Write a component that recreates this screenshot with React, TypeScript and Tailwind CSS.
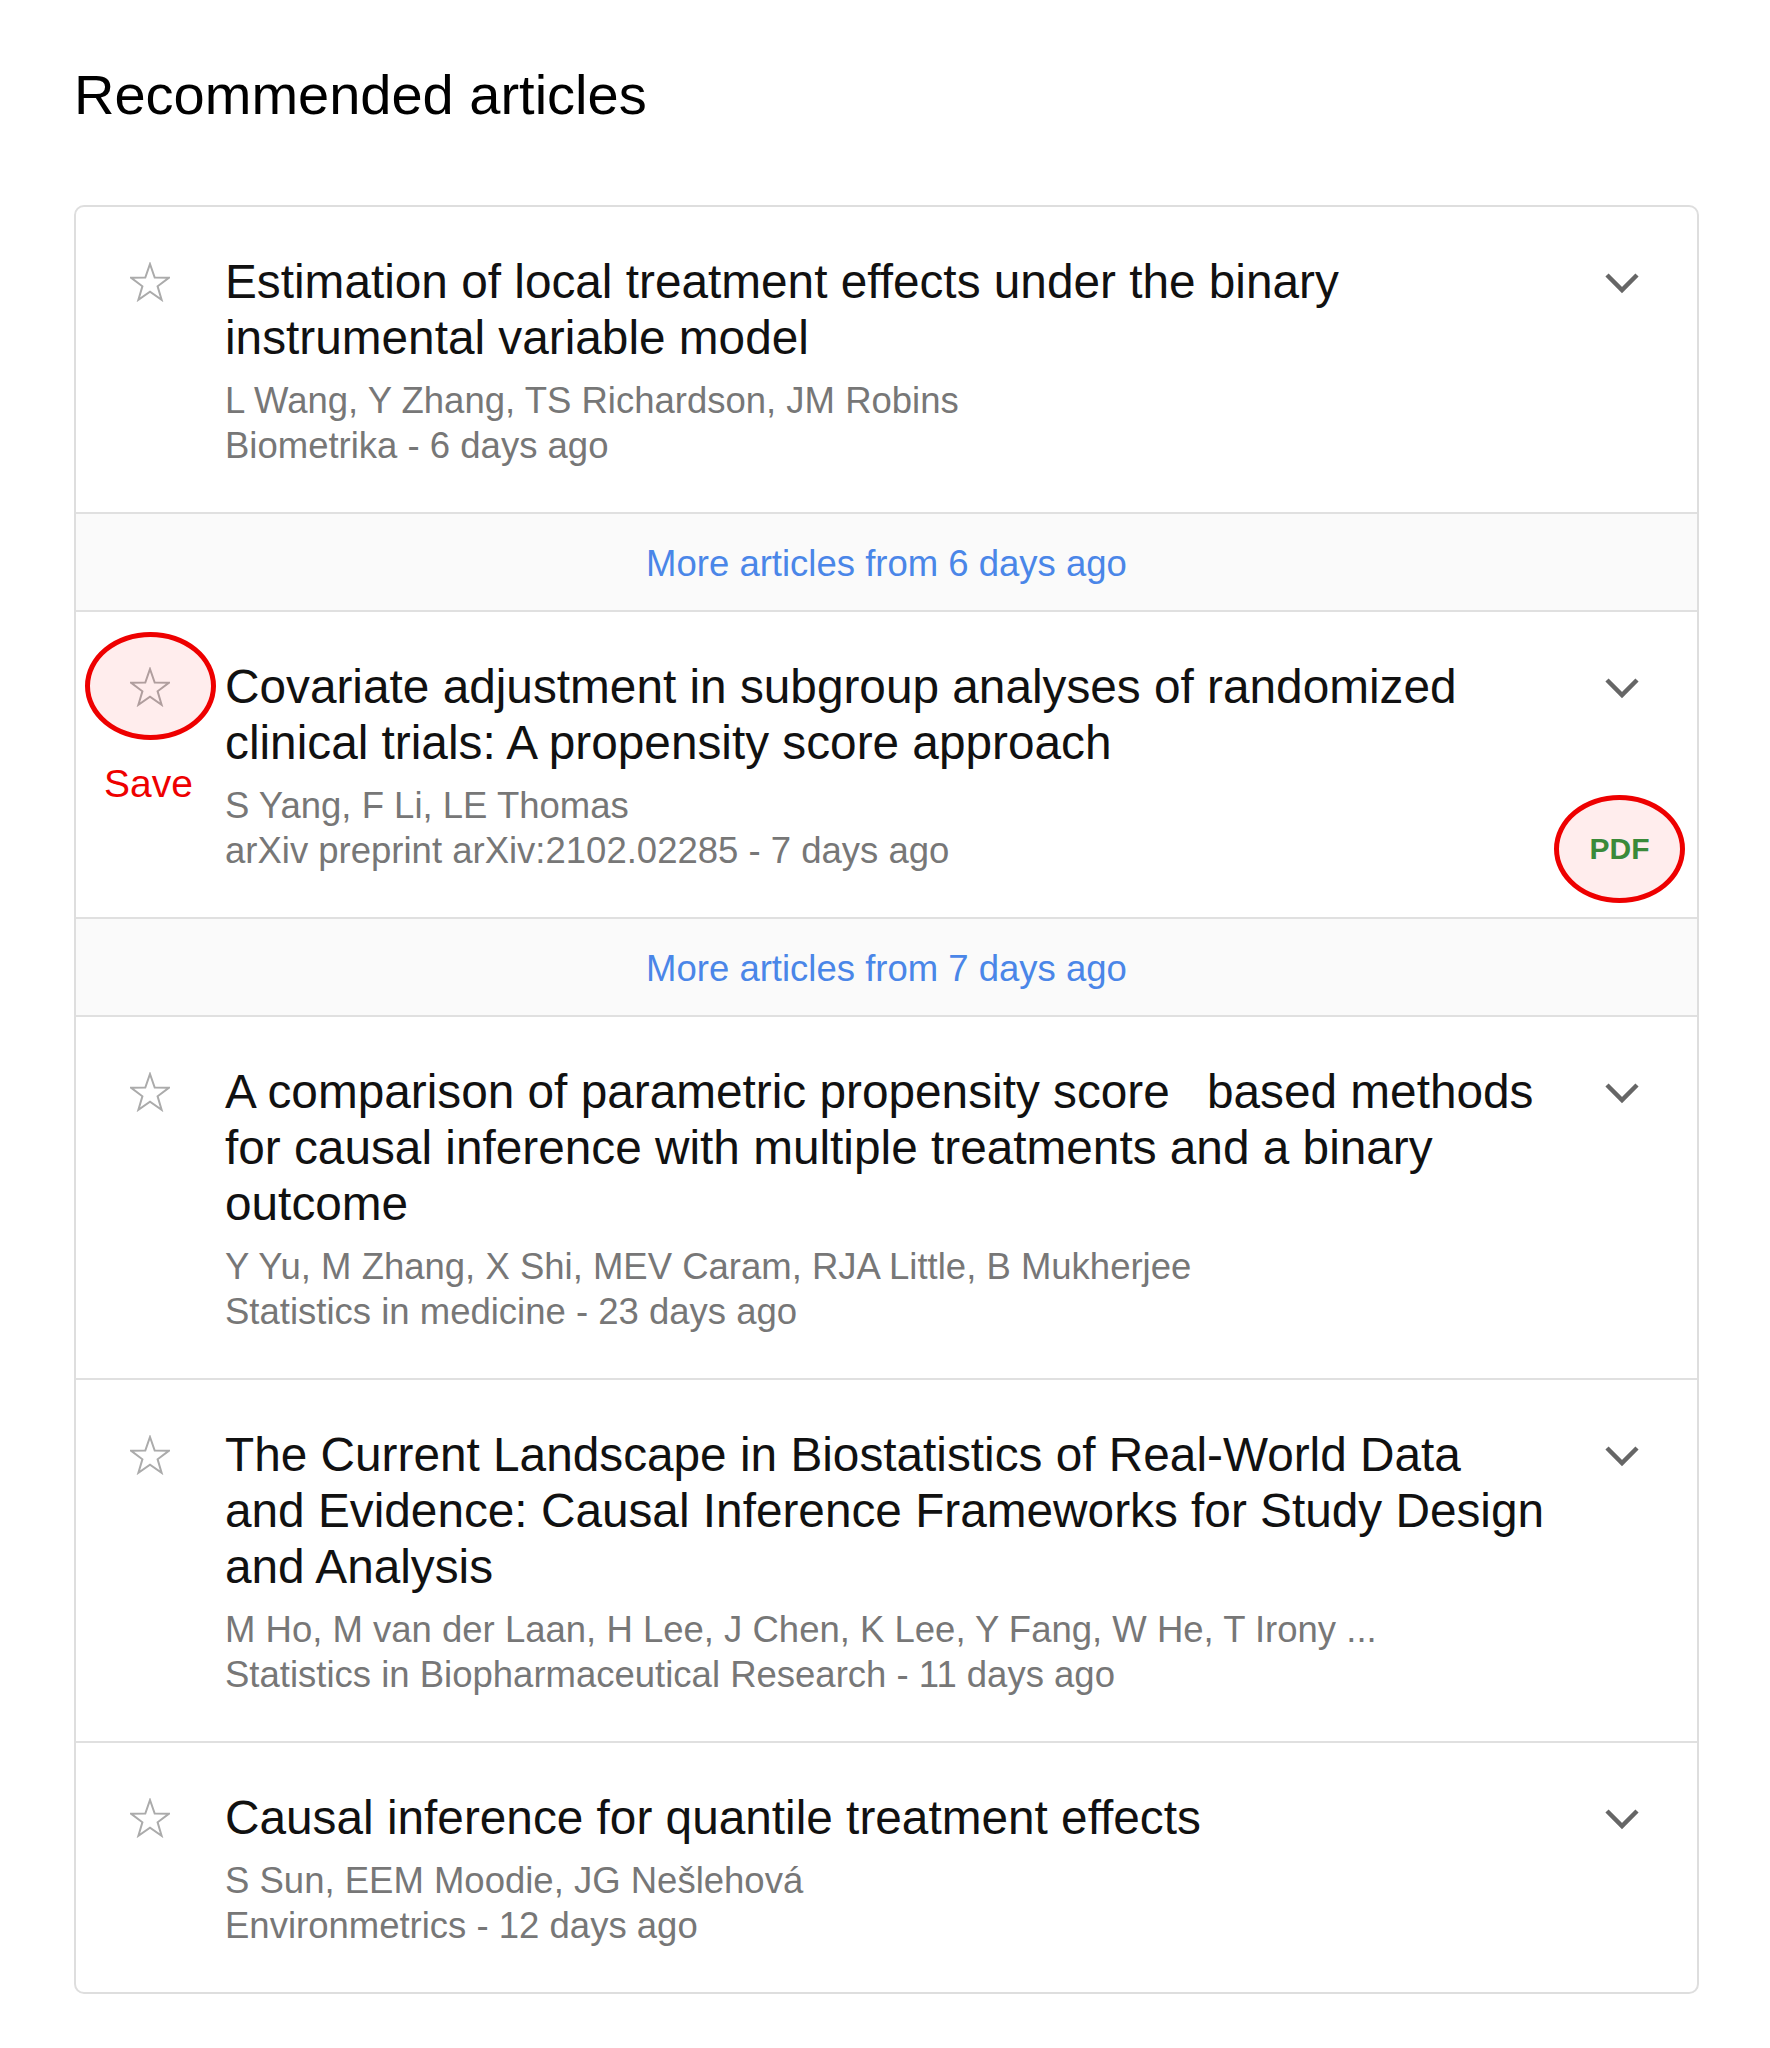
import React from "react";

type Article = {
  title: string;
  authors: string;
  source: string;
  annotated?: boolean;
};

const articles: Article[] = [
  {
    title: "Estimation of local treatment effects under the binary instrumental variable model",
    authors: "L Wang, Y Zhang, TS Richardson, JM Robins",
    source: "Biometrika - 6 days ago",
  },
  {
    title: "Covariate adjustment in subgroup analyses of randomized clinical trials: A propensity score approach",
    authors: "S Yang, F Li, LE Thomas",
    source: "arXiv preprint arXiv:2102.02285 - 7 days ago",
    annotated: true,
  },
  {
    title:
      "A comparison of parametric propensity score\u2002 based methods for causal inference with multiple treatments and a binary outcome",
    authors: "Y Yu, M Zhang, X Shi, MEV Caram, RJA Little, B Mukherjee",
    source: "Statistics in medicine - 23 days ago",
  },
  {
    title:
      "The Current Landscape in Biostatistics of Real-World Data and Evidence: Causal Inference Frameworks for Study Design and Analysis",
    authors: "M Ho, M van der Laan, H Lee, J Chen, K Lee, Y Fang, W He, T Irony ...",
    source: "Statistics in Biopharmaceutical Research - 11 days ago",
  },
  {
    title: "Causal inference for quantile treatment effects",
    authors: "S Sun, EEM Moodie, JG Nešlehová",
    source: "Environmetrics - 12 days ago",
  },
];

function Star() {
  return (
    <svg width="40" height="40" viewBox="0 0 40 40" className="block">
      <polygon
        points="20,2 24.7,15.5 38.8,15.8 27.6,24.3 31.6,37.8 20,29.8 8.4,37.8 12.4,24.3 1.2,15.8 15.3,15.5"
        fill="none"
        stroke="#ababab"
        strokeWidth="2"
        strokeLinejoin="miter"
      />
    </svg>
  );
}

function Chevron() {
  return (
    <svg width="34" height="22" viewBox="0 0 34 22" className="block">
      <polyline points="2,3 17,18 32,3" fill="none" stroke="#666666" strokeWidth="4.5" />
    </svg>
  );
}

function ArticleRow({ a }: { a: Article }) {
  return (
    <div className="relative flex items-start pt-[47px] pb-[44px] pl-[54px] pr-[58px]">
      <div className="w-[40px] shrink-0 pt-[8px]">
        <Star />
      </div>
      <div className="ml-[55px] mr-[27px] w-[1323px] shrink-0">
        <div className="text-[47.75px] leading-[56px] text-[#111111]">{a.title}</div>
        <div className="mt-[12px] text-[36.5px] leading-[45px] text-[#777777]">
          <div>{a.authors}</div>
          <div>{a.source}</div>
        </div>
      </div>
      <div className="ml-[30px] w-[34px] shrink-0 pt-[18px]">
        <Chevron />
      </div>
      {a.annotated && (
        <>
          <div className="absolute left-[9px] top-[20px] h-[108px] w-[131px] rounded-[50%] border-[5px] border-[#ee0000] bg-[rgba(255,0,0,0.07)]" />
          <div className="absolute left-[28px] top-[149px] text-[39px] leading-[45px] text-[#ee0000]">
            Save
          </div>
          <div className="absolute right-[12px] top-[183px] flex h-[108px] w-[131px] items-center justify-center rounded-[50%] border-[5px] border-[#ee0000] bg-[rgba(255,0,0,0.07)]">
            <span className="text-[30px] font-bold leading-none text-[#3a8a3a]">PDF</span>
          </div>
        </>
      )}
    </div>
  );
}

function MoreRow({ label }: { label: string }) {
  return (
    <div className="border-t-2 border-[#e0e0e0] bg-[#fafafa] pt-[32px] pb-[28px] text-center text-[36.5px] leading-[36px] text-[#4a86e8]">
      {label}
    </div>
  );
}

export default function App() {
  return (
    <div
      className="min-h-[2048px] w-[1770px] bg-white"
      style={{ fontFamily: '"Liberation Sans", Arial, sans-serif' }}
    >
      <h1 className="ml-[74px] pt-[63px] text-[56px] font-normal leading-[64px] text-black">
        Recommended articles
      </h1>
      <div className="ml-[74px] mt-[78px] w-[1625px] overflow-hidden rounded-[10px] border-2 border-[#dedede] bg-white">
        <ArticleRow a={articles[0]} />
        <MoreRow label="More articles from 6 days ago" />
        <div className="border-t-2 border-[#e0e0e0]">
          <ArticleRow a={articles[1]} />
        </div>
        <MoreRow label="More articles from 7 days ago" />
        <div className="border-t-2 border-[#e0e0e0]">
          <ArticleRow a={articles[2]} />
        </div>
        <div className="border-t-2 border-[#e0e0e0]">
          <ArticleRow a={articles[3]} />
        </div>
        <div className="border-t-2 border-[#e0e0e0]">
          <ArticleRow a={articles[4]} />
        </div>
      </div>
    </div>
  );
}
